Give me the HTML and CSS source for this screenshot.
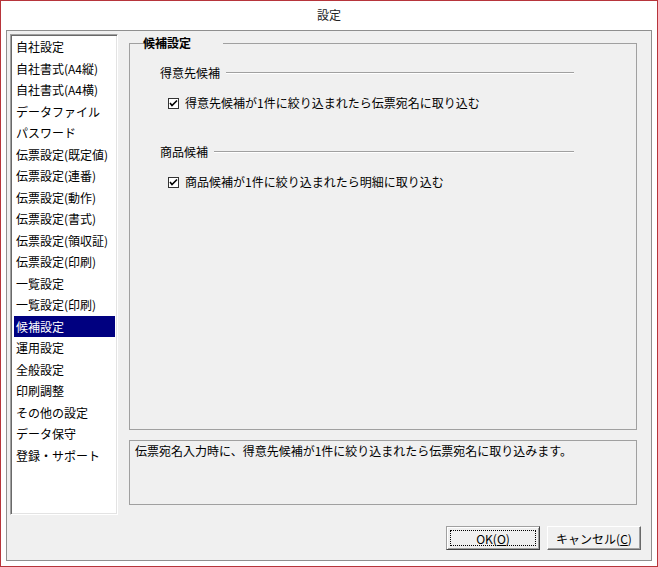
FILE: index.html
```html
<!DOCTYPE html>
<html lang="ja">
<head>
  <meta charset="UTF-8">
  <title>設定</title>
  <link rel="stylesheet" href="styles.css">
</head>
<body>
  <div class="window">
    <div class="title-bar">設定</div>
    <div class="client">
      <div class="main">
        <ul class="menu-list">
          <li>自社設定</li>
          <li>自社書式(A4縦)</li>
          <li>自社書式(A4横)</li>
          <li>データファイル</li>
          <li>パスワード</li>
          <li>伝票設定(既定値)</li>
          <li>伝票設定(連番)</li>
          <li>伝票設定(動作)</li>
          <li>伝票設定(書式)</li>
          <li>伝票設定(領収証)</li>
          <li>伝票設定(印刷)</li>
          <li>一覧設定</li>
          <li>一覧設定(印刷)</li>
          <li class="selected">候補設定</li>
          <li>運用設定</li>
          <li>全般設定</li>
          <li>印刷調整</li>
          <li>その他の設定</li>
          <li>データ保守</li>
          <li>登録・サポート</li>
        </ul>

        <div class="settings">
          <fieldset class="group-box">
            <legend>候補設定</legend>

            <div class="section-head">
              <span>得意先候補</span>
              <span class="rule"></span>
            </div>
            <label class="check-row">
              <span class="check-box">
                <svg width="9" height="9" viewBox="0 0 9 9"><path d="M1 4 L3 6.5 L8 1.5" fill="none" stroke="#000" stroke-width="1.6"/></svg>
              </span>
              <span>得意先候補が1件に絞り込まれたら伝票宛名に取り込む</span>
            </label>

            <div class="section-head second">
              <span>商品候補</span>
              <span class="rule"></span>
            </div>
            <label class="check-row">
              <span class="check-box">
                <svg width="9" height="9" viewBox="0 0 9 9"><path d="M1 4 L3 6.5 L8 1.5" fill="none" stroke="#000" stroke-width="1.6"/></svg>
              </span>
              <span>商品候補が1件に絞り込まれたら明細に取り込む</span>
            </label>
          </fieldset>

          <div class="description">伝票宛名入力時に、得意先候補が1件に絞り込まれたら伝票宛名に取り込みます。</div>
        </div>
      </div>

      <div class="button-row">
        <button class="btn default">OK(<u>O</u>)</button>
        <button class="btn">キャンセル(<u>C</u>)</button>
      </div>
    </div>
  </div>
</body>
</html>
```

FILE: styles.css
```css
* {
  margin: 0;
  padding: 0;
  box-sizing: border-box;
}

body {
  font-family: 'Noto Sans CJK JP', 'Liberation Sans', sans-serif;
  font-size: 12px;
  color: #000;
  background: #fff;
}

.window {
  width: 658px;
  height: 567px;
  border: 1px solid #b7353b;
  background: #fff;
  display: flex;
  flex-direction: column;
}

.title-bar {
  height: 29px;
  line-height: 28px;
  text-align: center;
  color: #222;
}

.client {
  flex: 1;
  margin: 0 5px 5px 5px;
  background: #f0f0f0;
  border: 1px solid #8f8f8f;
  padding: 3px 0 0 3px;
  display: flex;
  flex-direction: column;
}

.main {
  display: flex;
  align-items: flex-start;
}

/* Left list */
.menu-list {
  list-style: none;
  width: 108px;
  height: 481px;
  background: #fff;
  border: 1px solid;
  border-color: #a0a0a0 #fff #fff #a0a0a0;
  box-shadow: inset 1px 1px 0 #696969, inset -1px -1px 0 #e3e3e3;
  padding: 1px 0 0 1px;
}

.menu-list li {
  height: 21.5px;
  line-height: 21.5px;
  margin: 0 2px;
  padding-left: 2px;
  white-space: nowrap;
}

.menu-list li.selected {
  background: #000080;
  color: #fff;
}

/* Right side */
.settings {
  width: 508px;
  margin-left: 11px;
  padding-top: 1px;
}

.group-box {
  border: 1px solid #a0a0a0;
  height: 395px;
  padding: 0 0 0 30px;
}

.group-box legend {
  font-weight: bold;
  line-height: 16px;
  margin-left: 11px;
  padding: 0 2px;
  position: relative;
  left: -30px;
}

.section-head {
  display: flex;
  align-items: center;
  width: 414px;
  line-height: 16px;
  margin-top: 14px;
}

.section-head.second {
  margin-top: 33px;
}

.section-head .rule {
  flex: 1;
  margin-left: 6px;
  border-top: 1px solid #a0a0a0;
  border-bottom: 1px solid #fff;
}

.check-row {
  display: flex;
  align-items: center;
  line-height: 16px;
  margin-top: 14px;
  padding-left: 8px;
}

.check-box {
  width: 11px;
  height: 11px;
  border: 1px solid #333;
  background: #fff;
  margin-right: 6px;
  display: flex;
  align-items: center;
  justify-content: center;
}

.description {
  margin-top: 10px;
  height: 65px;
  border: 1px solid #a0a0a0;
  padding: 2px 5px;
  line-height: 16px;
}

/* Buttons */
.button-row {
  display: flex;
  justify-content: flex-end;
  gap: 7px;
  margin-top: 11px;
  padding-right: 10px;
}

.btn {
  width: 94px;
  height: 24px;
  font-family: inherit;
  font-size: 12px;
  background: #f0f0f0;
  border: 1px solid;
  border-color: #fff #696969 #696969 #fff;
  box-shadow: inset -1px -1px 0 #a0a0a0;
  color: #000;
}

.btn.default {
  border-color: #a0a0a0 #404040 #404040 #a0a0a0;
  box-shadow: inset 1px 1px 0 #fff, inset -1px -1px 0 #a0a0a0;
  outline: 1px dotted #000;
  outline-offset: -5px;
}
```
